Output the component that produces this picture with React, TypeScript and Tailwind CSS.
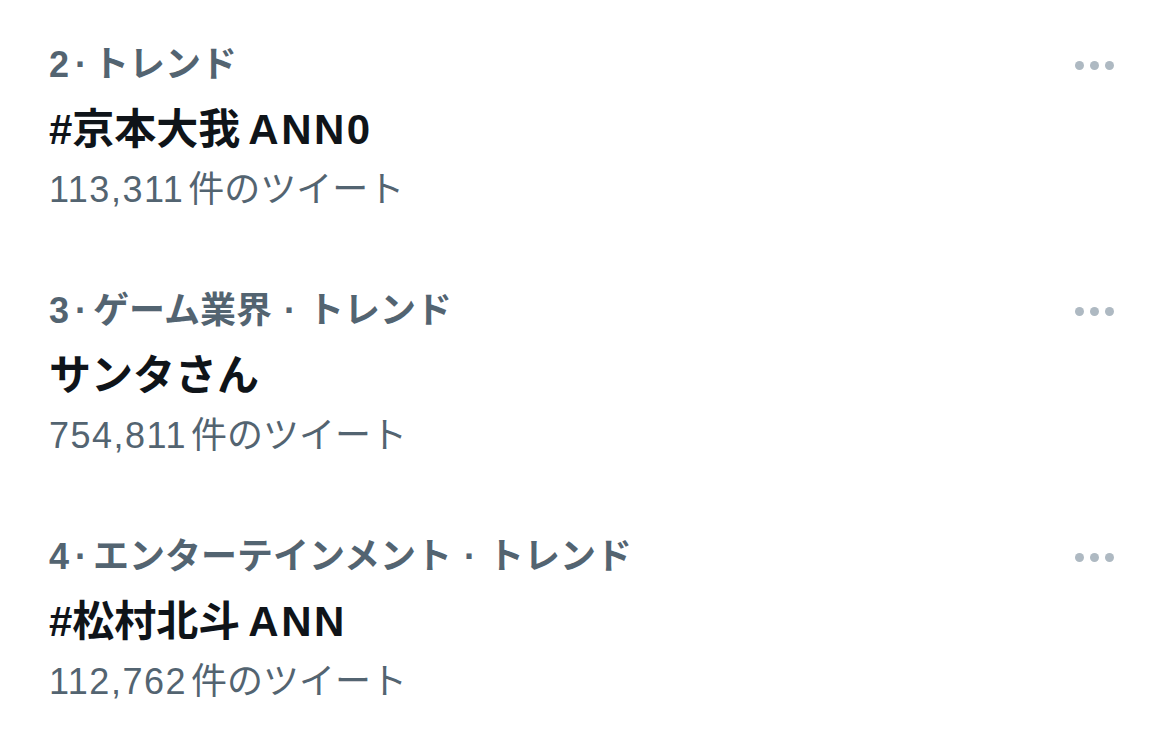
const trends = [
  { rank: "2", category: "", title: ["#京本大我", "ANN0"], count: "113,311" },
  { rank: "3", category: "ゲーム業界", title: ["サンタさん", ""], count: "754,811" },
  { rank: "4", category: "エンターテインメント", title: ["#松村北斗", "ANN"], count: "112,762" },
];

const font = {
  fontFamily: '"Liberation Sans", "Noto Sans CJK JP", sans-serif',
};

const MoreDots = () => (
  <div className="flex items-center gap-[6px] h-[48px]">
    <span className="w-[9px] h-[9px] rounded-full bg-[#aeb9c2]" />
    <span className="w-[9px] h-[9px] rounded-full bg-[#aeb9c2]" />
    <span className="w-[9px] h-[9px] rounded-full bg-[#aeb9c2]" />
  </div>
);

export default function App() {
  return (
    <div className="w-[1169px] h-[736px] bg-white overflow-hidden pt-[41px]" style={font}>
      {trends.map((t) => (
        <div key={t.rank} className="flex justify-between pl-[49px] pr-[55px] pb-[73px]">
          <div className="flex flex-col">
            <div className="h-[48px] leading-[48px] text-[36px] font-bold text-[#536471] whitespace-nowrap">
              {t.rank}
              <span className="mx-[6px]">·</span>
              {t.category && (
                <>
                  {t.category}
                  <span className="mx-[12px]">·</span>
                </>
              )}
              トレンド
            </div>
            <div className="mt-[13px] h-[56px] leading-[56px] text-[42px] font-bold text-[#0f1419] whitespace-nowrap">
              {t.title[0]}
              {t.title[1] && (
                <span className="ml-[8px] tracking-[2.5px]">{t.title[1]}</span>
              )}
            </div>
            <div className="mt-[8px] h-[48px] leading-[48px] text-[36px] text-[#536471] whitespace-nowrap">
              <span className="tracking-[1.5px] mr-[4px]">{t.count}</span>
              件のツイート
            </div>
          </div>
          <MoreDots />
        </div>
      ))}
    </div>
  );
}
